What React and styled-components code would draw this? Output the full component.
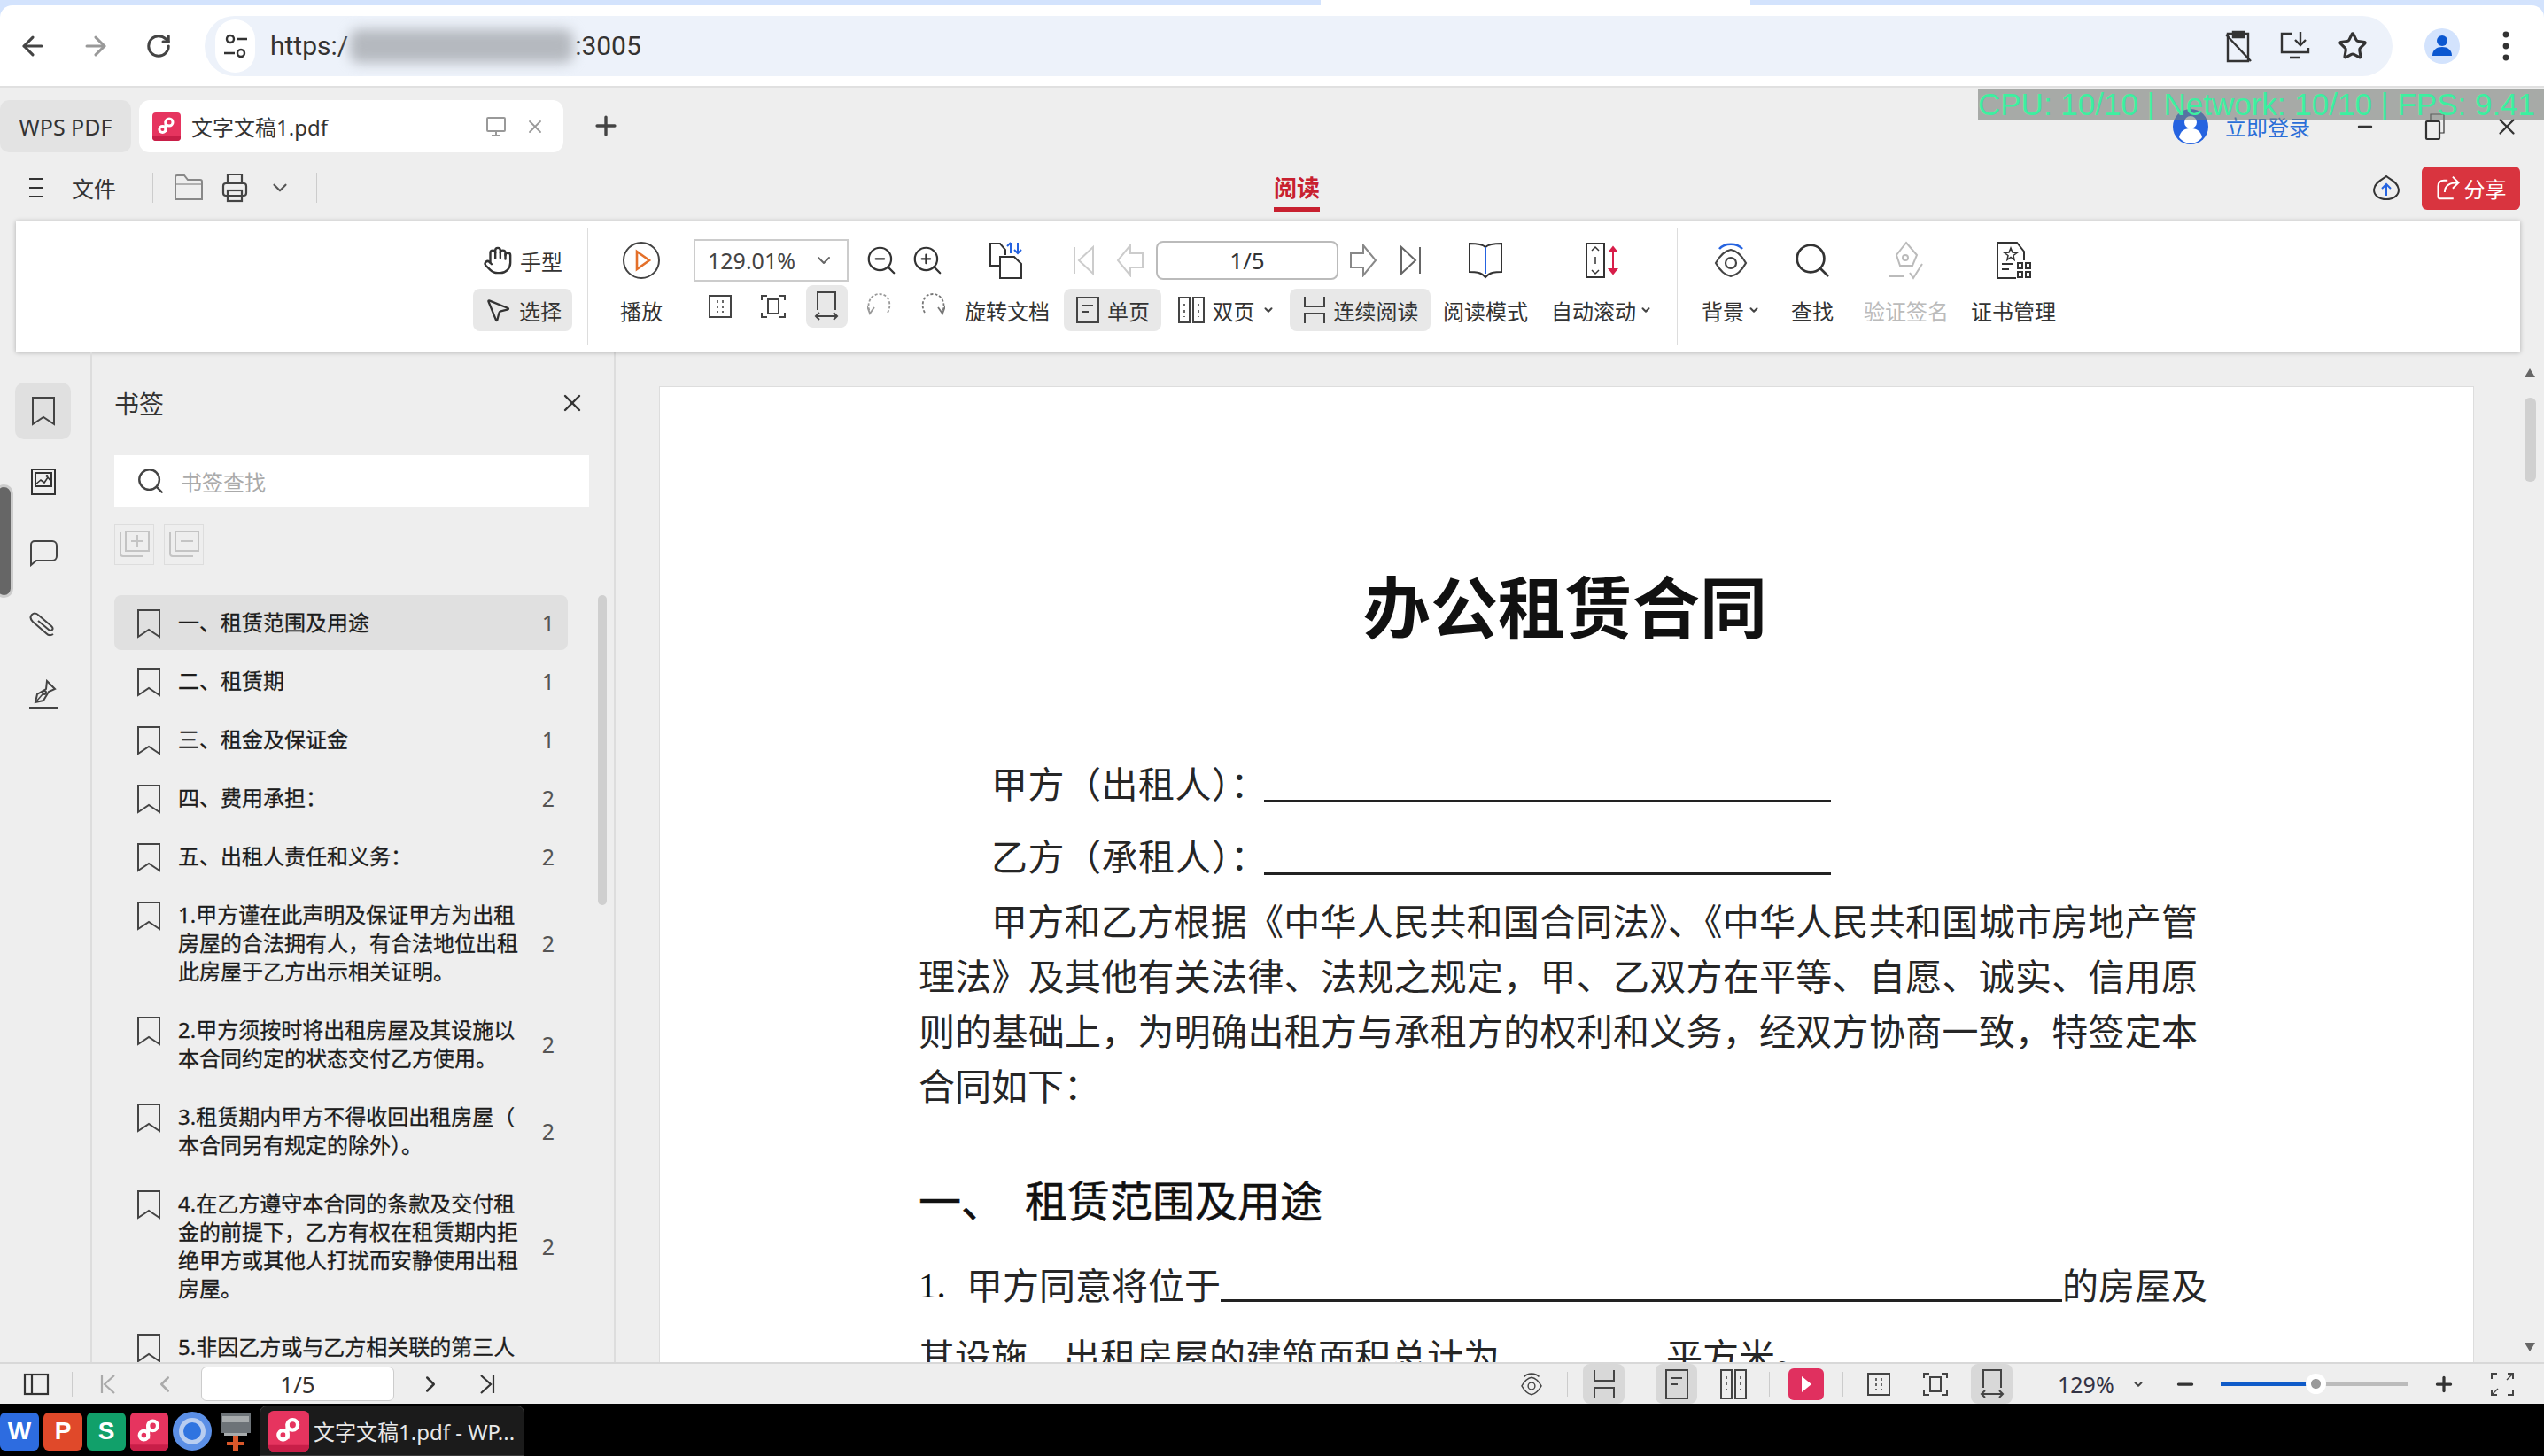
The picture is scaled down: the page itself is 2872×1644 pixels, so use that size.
import React from 'react';
import styled, { createGlobalStyle } from 'styled-components';
import {
  ArrowLeft, ArrowRight, RotateCw, Star, Plus, X, Minus, ChevronDown, ChevronLeft, ChevronRight,
  Hand, MousePointer2, ZoomIn, ZoomOut, Search,
} from 'lucide-react';

const GlobalStyle = createGlobalStyle`
  html, body { margin: 0; padding: 0; background: #eee; }
  body {
    width: 2872px;
    height: 1644px;
    overflow: hidden;
    font-family: "Noto Sans", "Noto Sans CJK SC", sans-serif;
    color: #222;
  }
  * { box-sizing: border-box; }
`;

const Svg = ({ w = 40, h = 40, sw = 2, c = '#333', children }) => (
  <svg width={w} height={h} viewBox={`0 0 ${w} ${h}`} fill="none" stroke={c} strokeWidth={sw}>
    {children}
  </svg>
);

// small drawings, sized in real pixels
const BookmarkIcon = () => (
  <Svg w={28} h={34} c="#444"><path d="M2 2H26V32L14 24L2 32Z" /></Svg>
);
const RailImage = () => (
  <Svg w={30} h={32} c="#333">
    <rect x="2" y="2" width="26" height="28" />
    <rect x="6" y="6" width="18" height="15" />
    <path d="M6 19l6-5 4 3 4-6 4 5" strokeWidth="1.6" />
    <circle cx="19" cy="9.5" r="1.4" fill="#333" stroke="none" />
  </Svg>
);
const RailComment = () => (
  <Svg w={34} h={32} c="#444">
    <path d="M7 3H27a5 5 0 0 1 5 5V20a5 5 0 0 1-5 5H9L3 30V7a4 4 0 0 1 4-4Z" />
  </Svg>
);
const RailClip = () => (
  <Svg w={34} h={32} c="#444">
    <path d="M28 28c-3 2-6 1-8-1L5 14c-3-3-3-6-1-8s5-2 8 1l14 12c2 2 2 3 1 4s-3 1-4 0L11 13" />
  </Svg>
);
const RailPen = () => (
  <Svg w={34} h={34} c="#444">
    <path d="M21 2l9 9-7 3-6 10-9 2 2-9 10-6Z" />
    <circle cx="18" cy="15" r="2" />
    <path d="M9 25l7-8" strokeWidth="1.5" />
    <path d="M1 32H33" />
  </Svg>
);
const ExpandIcon = ({ minus }) => (
  <Svg w={36} h={36} c="#c4c4c4">
    <path d="M2 4V28a3 3 0 0 0 3 3H28" />
    <rect x="8" y="3" width="26" height="22" />
    {minus ? <path d="M14 14H28" /> : <path d="M14 14H28M21 7V21" />}
  </Svg>
);
const PdfLogo = ({ size = 32 }) => (
  <svg width={size} height={size} viewBox="0 0 32 32" style={{ flex: 'none' }}>
    <rect width="32" height="32" rx="4" fill="#e6345f" />
    <path d="M0 27H32V28a4 4 0 0 1-4 4H4a4 4 0 0 1-4-4Z" fill="#c81e48" />
    <g fill="none" stroke="#fff" strokeWidth="3">
      <circle cx="11.5" cy="19" r="3.6" />
      <circle cx="19" cy="11" r="4" />
      <path d="M15 10V22" />
    </g>
  </svg>
);
const TabMonitor = () => (
  <Svg w={26} h={26} c="#999">
    <rect x="3" y="3" width="20" height="15" rx="1" />
    <path d="M8 23H18M13 18V23" />
  </Svg>
);
const UserBlue = () => (
  <svg width="42" height="42" viewBox="0 0 42 42">
    <circle cx="21" cy="21" r="20" fill="#2563e0" />
    <circle cx="21" cy="16" r="7" fill="#fff" />
    <path d="M8 33c2-8 7-10 13-10s11 2 13 10c-3 4-8 7-13 7s-10-3-13-7Z" fill="#fff" />
  </svg>
);
const Restore = () => (
  <Svg w={26} h={34} c="#333" sw={2.2}>
    <rect x="3" y="11" width="15" height="20" rx="1" />
    <path d="M8 11V3H23V24H18" strokeWidth="1.2" />
  </Svg>
);
const Hamburger = () => (
  <Svg w={20} h={26} c="#333" sw={2.2}><path d="M2 3H18M2 13H18M2 23H18" /></Svg>
);
const Folder = () => (
  <Svg w={34} h={34} c="#888">
    <path d="M2 30V5a2 2 0 0 1 2-2H12L16 8H30a2 2 0 0 1 2 2V30Z" />
    <path d="M2 13H32" strokeWidth="1.2" />
  </Svg>
);
const Printer = () => (
  <Svg w={30} h={34} c="#444" sw={2.2}>
    <path d="M7 12V2H23V12" />
    <rect x="2" y="12" width="26" height="14" rx="3" />
    <rect x="7" y="20" width="16" height="12" />
  </Svg>
);
const Cloud = () => (
  <svg width="32" height="28" viewBox="0 0 32 28" fill="none">
    <path d="M16 1c3 3 13 6 14 15 0 7-6 11-14 11S2 23 2 16C3 7 13 4 16 1Z" stroke="#333" strokeWidth="2" />
    <path d="M16 23V10M11 15l5-5 5 5" stroke="#2563e0" strokeWidth="2" />
  </svg>
);
const ShareArrow = () => (
  <Svg w={34} h={36} c="#fff" sw={2.4}>
    <path d="M16 8H11C6 8 3 11 3 16V30a3 3 0 0 0 3 3H24" />
    <path d="M12 24c0-9 7-13 18-13M23 3l8 8-8 8" />
  </Svg>
);
const PlayCircle = () => (
  <svg width="44" height="44" viewBox="0 0 44 44" fill="none">
    <circle cx="22" cy="22" r="20" stroke="#444" strokeWidth="2" />
    <path d="M17 12L31 22L17 32Z" stroke="#e4702a" strokeWidth="2.6" />
  </svg>
);
const FitPage = () => (
  <Svg w={28} h={28} c="#444">
    <rect x="2" y="2" width="24" height="24" />
    <path d="M11 7V21M17 7V21" strokeDasharray="3 3" strokeWidth="1.6" />
  </Svg>
);
const FitFrame = () => (
  <Svg w={30} h={28} c="#444">
    <path d="M2 7V2H8M22 2H28V7M2 21V26H8M22 26H28V21" />
    <rect x="9" y="6" width="12" height="16" />
  </Svg>
);
const FitWidth = () => (
  <Svg w={28} h={36} c="#444">
    <path d="M4 22V2H24V22" />
    <path d="M2 29H26M6 25l-4 4 4 4M22 25l4 4-4 4" />
  </Svg>
);
const RotateRight = ({ c = '#777' }) => (
  <Svg w={28} h={34} c={c} sw={1.8}>
    <path d="M5 24C0 16 3 3 14 3s15 12 11 20" strokeDasharray="3 2" />
    <path d="M20 18l5 7 3-8" />
  </Svg>
);
const Mirrored = styled.span`
  display: flex;
  transform: scaleX(-1);
`;
const RotateDoc = () => (
  <svg width="44" height="44" viewBox="0 0 44 44" fill="none" stroke="#333" strokeWidth="2">
    <path d="M14 28H3V3H14L20 10V16" />
    <path d="M14 18H30L38 26V42H14Z" />
    <path d="M26 2V14M22 6l4-4M34 2V14M30 10l4 4 4-4" stroke="#2563e0" />
  </svg>
);
const NavFirst = () => (
  <Svg w={28} h={36} c="#ccc"><path d="M3 3V33" /><path d="M24 3L8 18L24 33Z" /></Svg>
);
const NavPrev = () => (
  <Svg w={32} h={38} c="#ccc"><path d="M16 2L2 19L16 36V27H30V11H16Z" /></Svg>
);
const NavNext = () => (
  <Svg w={32} h={38} c="#888"><path d="M16 2L30 19L16 36V27H2V11H16Z" /></Svg>
);
const NavLast = () => (
  <Svg w={28} h={36} c="#666"><path d="M25 3V33" /><path d="M4 3L20 18L4 33Z" /></Svg>
);
const SinglePage = ({ h = 32 }) => (
  <Svg w={28} h={h} c="#444">
    <rect x="2" y="2" width="24" height={h - 4} />
    <path d="M8 11H20M8 18H15" />
  </Svg>
);
const DoublePage = ({ h = 32 }) => (
  <Svg w={32} h={h} c="#444">
    <rect x="2" y="2" width="12" height={h - 4} />
    <rect x="18" y="2" width="12" height={h - 4} />
    <path d="M8 9V24M24 9V24" strokeDasharray="3 4" strokeWidth="1.6" />
  </Svg>
);
const Continuous = ({ h = 30 }) => (
  <Svg w={28} h={h} c="#444">
    <path d={`M3 0V${h / 2 - 4}H25V0M3 ${h}V${h / 2 + 4}H25V${h}`} />
  </Svg>
);
const BookIcon = () => (
  <svg width="40" height="42" viewBox="0 0 40 42" fill="none" stroke="#333" strokeWidth="2">
    <path d="M20 6C16 2 8 2 2 2V34C8 34 15 34 20 40C25 34 32 34 38 34V2C32 2 24 2 20 6Z" />
    <path d="M20 6V36" stroke="#2563e0" />
  </svg>
);
const AutoScroll = () => (
  <svg width="38" height="42" viewBox="0 0 38 42" fill="none" stroke="#333" strokeWidth="2">
    <rect x="2" y="2" width="20" height="38" />
    <path d="M8 10l4-4 4 4M12 17V25M8 32l4 4 4-4" strokeWidth="1.5" />
    <path d="M32 8V34" stroke="#d81e4a" />
    <path d="M28 11l4-5 4 5ZM28 31l4 5 4-5Z" stroke="#d81e4a" fill="#d81e4a" />
  </svg>
);
const EyeIcon = ({ w = 40, h = 40, arc = '#2563e0' }) => (
  <svg width={w} height={h} viewBox="0 0 40 40" fill="none" stroke="#444" strokeWidth="2.2">
    <path d="M7 7C13 0 27 0 33 7" stroke={arc} strokeWidth="2.6" />
    <path d="M3 23C8 14 14 9 20 8C26 9 32 14 37 23C32 32 26 37 20 38C14 37 8 32 3 23Z" />
    <circle cx="20" cy="23" r="6" />
  </svg>
);
const SignCheck = () => (
  <svg width="44" height="44" viewBox="0 0 44 44" fill="none" stroke="#bbb" strokeWidth="2">
    <path d="M22 2L34 16L29 28H15L11 16Z" />
    <circle cx="21" cy="19" r="3" />
    <path d="M2 40H20M26 36l4 6 10-16" />
  </svg>
);
const CertIcon = () => (
  <svg width="42" height="44" viewBox="0 0 42 44" fill="none" stroke="#333" strokeWidth="2">
    <path d="M24 42H3V2H25L33 12V22" />
    <path d="M18 8l2 5 5 .5-4 3 1 5-4-3-4 3 1-5-4-3 5-.5Z" strokeWidth="1.5" />
    <path d="M8 26H20M8 32H16" />
    <rect x="26" y="25" width="5" height="6" />
    <rect x="35" y="25" width="5" height="6" />
    <rect x="26" y="35" width="5" height="6" />
    <rect x="35" y="35" width="5" height="6" />
  </svg>
);
const SiteTune = () => (
  <Svg w={28} h={30} c="#333" sw={2.4}>
    <circle cx="8" cy="7" r="4" />
    <path d="M15 7H27M1 23H13" />
    <circle cx="20" cy="23" r="4" />
  </Svg>
);
const ClipOff = () => (
  <Svg w={32} h={38} c="#333" sw={2.4}>
    <path d="M10 5H4V36H27V5H22" />
    <path d="M10 3H22V9H10Z" fill="#333" />
    <path d="M2 6L30 36" />
  </Svg>
);
const InstallIcon = () => (
  <Svg w={36} h={36} c="#333" sw={2.4}>
    <path d="M14 4H3V25H33V20M12 31H24" />
    <path d="M24 2V16M18 11l6 6 6-6" />
  </Svg>
);
const ChromeUser = () => (
  <svg width="40" height="40" viewBox="0 0 40 40">
    <circle cx="20" cy="20" r="20" fill="#d3e3fd" />
    <circle cx="20" cy="14" r="6" fill="#0b57d0" />
    <path d="M9 31c0-7 5-10 11-10s11 3 11 10Z" fill="#0b57d0" />
  </svg>
);
const Dots = () => (
  <svg width="10" height="36" viewBox="0 0 10 36">
    <circle cx="5" cy="5" r="3.4" fill="#333" />
    <circle cx="5" cy="18" r="3.4" fill="#333" />
    <circle cx="5" cy="31" r="3.4" fill="#333" />
  </svg>
);
const PanelToggle = () => (
  <Svg w={30} h={26} c="#333" sw={2.2}>
    <rect x="2" y="2" width="26" height="22" />
    <path d="M10 2V24" />
  </Svg>
);
const SmallFirst = () => (
  <Svg w={20} h={26} c="#aaa" sw={2.2}><path d="M3 3V23M17 3L6 13L17 23" /></Svg>
);
const SmallLast = () => (
  <Svg w={20} h={26} c="#333" sw={2.2}><path d="M17 3V23M3 3L14 13L3 23" /></Svg>
);
const FullScreen = () => (
  <Svg w={30} h={30} c="#444">
    <path d="M3 9V3H9M21 3H27V9M3 21V27H9M21 27H27V21" />
    <path d="M3 27L10 20M27 3L20 10" strokeWidth="1.4" />
  </Svg>
);
const ChromeBall = () => (
  <svg width="44" height="44" viewBox="0 0 44 44">
    <circle cx="22" cy="22" r="22" fill="#5b8fe6" />
    <circle cx="22" cy="22" r="15" fill="#b8cdf0" />
    <circle cx="22" cy="22" r="10" fill="#2f74e0" />
  </svg>
);
const ToolApp = () => (
  <svg width="36" height="44" viewBox="0 0 36 44">
    <rect x="1" y="2" width="34" height="22" fill="#6d7378" />
    <rect x="3" y="5" width="30" height="7" fill="#a7abad" />
    <rect x="5" y="24" width="26" height="3" fill="#a7abad" />
    <path d="M15 27H21V34H28V38H21V44H15V38H8V34H15Z" fill="#d8572a" />
  </svg>
);

const Screen = styled.div`
  width: 2872px;
  height: 1644px;
  display: flex;
  flex-direction: column;
  overflow: hidden;
  position: relative;
`;

/* browser chrome */
const BrowserTop = styled.div`
  background: linear-gradient(90deg, #d3e3fd 1491px, #fff 1491px, #fff 1976px, #d3e3fd 1976px);
  flex: none;
`;
const BrowserBar = styled.div`
  height: 93px;
  margin-top: 6px;
  background: #fff;
  border-bottom: 2px solid #e0e0e0;
  border-radius: 14px 14px 0 0;
  display: flex;
  align-items: center;
  padding-left: 20px;
`;
const NavBtn = styled.span`
  width: 34px;
  height: 34px;
  margin-right: 37px;
  display: flex;
  align-items: center;
  justify-content: center;
  color: ${(p) => p.$c || '#444'};
`;
const Omnibox = styled.div`
  width: 2470px;
  height: 68px;
  margin-left: -2px;
  background: #edf2fa;
  border-radius: 34px;
  display: flex;
  align-items: center;
  padding: 0 28px 0 12px;
  font-family: Roboto, "Noto Sans", sans-serif;
  font-size: 30px;
  color: #333;
`;
const SiteBtn = styled.span`
  width: 45px;
  height: 60px;
  border-radius: 23px;
  background: #fff;
  margin-right: 17px;
  display: flex;
  align-items: center;
  justify-content: center;
`;
const BlurHost = styled.span`
  display: inline-block;
  width: 252px;
  height: 38px;
  margin: 0 2px;
  border-radius: 10px;
  background: #b5b9bf;
  filter: blur(7px);
`;
const OmniActions = styled.div`
  margin-left: auto;
  display: flex;
  align-items: center;
  gap: 30px;
`;
const BrowserRight = styled.div`
  margin-left: 36px;
  display: flex;
  align-items: center;
  gap: 47px;
`;

/* wps header */
const TabRow = styled.div`
  height: 88px;
  padding-top: 14px;
  display: flex;
  align-items: flex-start;
  background: #eee;
  flex: none;
`;
const HomeTab = styled.div`
  width: 148px;
  height: 59px;
  background: #e3e3e3;
  border-radius: 10px;
  display: flex;
  align-items: center;
  justify-content: center;
  font-size: 25px;
  color: #333;
`;
const DocTab = styled.div`
  width: 479px;
  height: 59px;
  margin-left: 9px;
  background: #fff;
  border-radius: 12px;
  display: flex;
  align-items: center;
  padding: 0 20px 0 15px;
  font-size: 24px;
  color: #333;
  span:nth-child(2) { margin-left: 12px; flex: 1; }
`;
const TabClose = styled(X).attrs({ size: 24, strokeWidth: 1.8, color: '#999' })`
  margin-left: 19px;
`;
const NewTab = styled.span`
  margin: 12px 0 0 31px;
  display: flex;
  color: #444;
`;
const WinControls = styled.div`
  margin-left: auto;
  height: 59px;
  display: flex;
  align-items: center;
  padding-right: 22px;
`;
const LoginText = styled.span`
  margin: 0 42px 0 18px;
  font-size: 24px;
  color: #2a6ed8;
`;
const WinBtn = styled.span`
  width: 40px;
  display: flex;
  justify-content: center;
  margin-left: ${(p) => p.$ml || 0}px;
  color: #333;
`;
const PerfBadge = styled.div`
  position: absolute;
  left: 2233px;
  top: 100px;
  width: 639px;
  height: 36px;
  background: rgba(120, 125, 120, 0.6);
  color: #3cf0a0;
  font-family: "Liberation Sans", sans-serif;
  font-size: 35px;
  line-height: 36px;
  white-space: nowrap;
  overflow: hidden;
  z-index: 5;
`;
const MenuRow = styled.div`
  height: 63px;
  display: flex;
  align-items: flex-start;
  flex: none;
  padding-left: 31px;
`;
const MenuLeft = styled.div`
  width: 1407px;
  height: 50px;
  display: flex;
  align-items: center;
  font-size: 25px;
  color: #333;
`;
const MenuLabel = styled.span`
  margin-left: 30px;
`;
const MenuSep = styled.span`
  width: 1px;
  height: 34px;
  background: #ccc;
  margin: 0 ${(p) => p.$mr || 0}px 0 ${(p) => p.$ml || 0}px;
`;
const MenuIcon = styled.span`
  display: flex;
  margin-left: ${(p) => p.$ml}px;
`;
const ActiveMenu = styled.div`
  width: 52px;
  height: 52px;
  border-bottom: 5px solid #c8202f;
  color: #c8202f;
  font-size: 26px;
  font-weight: 700;
  line-height: 50px;
  white-space: nowrap;
`;
const MenuRight = styled.div`
  margin-left: auto;
  height: 50px;
  display: flex;
  align-items: center;
  padding-right: 27px;
  gap: 24px;
`;
const ShareBtn = styled.div`
  width: 111px;
  height: 49px;
  background: #d9343f;
  border-radius: 6px;
  display: flex;
  align-items: center;
  justify-content: center;
  gap: 4px;
  color: #fff;
  font-size: 24px;
  svg { width: 28px; height: 30px; }
`;

/* ribbon */
const Ribbon = styled.div`
  height: 148px;
  margin: 0 27px 0 18px;
  padding-top: 20px;
  background: #fff;
  box-shadow: 0 0 5px rgba(0, 0, 0, 0.28);
  display: flex;
  align-items: flex-start;
  flex: none;
  position: relative;
  font-size: 24px;
  color: #333;
  white-space: nowrap;
`;
const RibbonSep = styled.span`
  width: 1px;
  height: 132px;
  margin: -12px 0 0 ${(p) => p.$ml}px;
  background: #ddd;
  flex: none;
`;
const ToolColumn = styled.div`
  width: ${(p) => p.$w}px;
  margin-left: ${(p) => p.$ml}px;
  display: flex;
  flex-direction: column;
  align-items: center;
  gap: 8px;
  flex: none;
  color: ${(p) => (p.$off ? '#bbb' : '#333')};
`;
const IconSlot = styled.div`
  height: 48px;
  display: flex;
  align-items: center;
  justify-content: center;
`;
const ToolLabel = styled.div`
  height: 48px;
  display: flex;
  align-items: center;
  gap: 4px;
`;
const ModeBtn = styled.div`
  width: ${(p) => p.$w}px;
  height: 48px;
  display: flex;
  align-items: center;
  justify-content: center;
  gap: 8px;
  border-radius: 8px;
  background: ${(p) => (p.$on ? '#e8e8e8' : 'transparent')};
`;
const ZoomGrid = styled.div`
  width: 290px;
  margin-left: 11px;
  flex: none;
`;
const ZoomTop = styled.div`
  display: grid;
  grid-template-columns: 175px 74px 30px;
  height: 48px;
  margin-bottom: 4px;
  align-items: center;
  justify-items: center;
`;
const ZoomSelect = styled.div`
  width: 175px;
  height: 48px;
  border: 2px solid #ccc;
  display: flex;
  align-items: center;
  justify-content: space-between;
  padding: 0 14px;
  font-size: 25px;
  color: #444;
`;
const FitRow = styled.div`
  display: grid;
  grid-template-columns: repeat(5, 60px);
  height: 48px;
  justify-items: center;
  align-items: center;
`;
const FitBtn = styled.div`
  width: 47px;
  height: 48px;
  display: flex;
  align-items: center;
  justify-content: center;
  border-radius: 8px;
  background: ${(p) => (p.$on ? '#e8e8e8' : 'transparent')};
`;
const PageCluster = styled.div`
  width: 414px;
  margin-left: 16px;
  flex: none;
`;
const PageNav = styled.div`
  display: grid;
  grid-template-columns: 46px 58px 206px 56px 50px;
  height: 48px;
  margin-bottom: 8px;
  align-items: center;
  justify-items: center;
`;
const PageInput = styled.div`
  width: 206px;
  height: 44px;
  border: 2px solid #bbb;
  border-radius: 8px;
  display: flex;
  align-items: center;
  justify-content: center;
  font-size: 26px;
  color: #333;
`;
const ModeRow = styled.div`
  display: flex;
  justify-content: space-between;
`;
const Caret = styled(ChevronDown).attrs({ size: 14, strokeWidth: 3.5 })`
  color: #444;
`;

/* main */
const Body = styled.div`
  flex: 1;
  min-height: 0;
  display: flex;
  background: #eee;
`;
const Rail = styled.div`
  width: 104px;
  flex: none;
  border-right: 2px solid #ddd;
  padding-top: 34px;
  display: flex;
  flex-direction: column;
  align-items: center;
  position: relative;
`;
const RailBtn = styled.div`
  width: 63px;
  height: 64px;
  margin-top: ${(p) => p.$mt || 0}px;
  margin-left: -5px;
  border-radius: 10px;
  display: flex;
  align-items: center;
  justify-content: center;
  background: ${(p) => (p.$on ? '#e0e0e0' : 'transparent')};
`;
const Grabber = styled.div`
  position: absolute;
  left: -6px;
  top: 149px;
  width: 21px;
  height: 128px;
  background: #666;
  border: 3px solid #ccc;
  border-radius: 14px;
`;
const Panel = styled.div`
  width: 591px;
  flex: none;
  border-right: 2px solid #ddd;
  padding-left: 25px;
  overflow: hidden;
`;
const PanelHead = styled.div`
  height: 114px;
  margin-bottom: 2px;
  width: 536px;
  padding-right: 3px;
  display: flex;
  align-items: center;
  justify-content: space-between;
  font-size: 28px;
  color: #333;
`;
const SearchBox = styled.div`
  width: 536px;
  height: 58px;
  background: #fff;
  display: flex;
  align-items: center;
  padding-left: 24px;
  gap: 17px;
  font-size: 24px;
  color: #aaa;
  svg { color: #444; }
`;
const PanelTools = styled.div`
  display: flex;
  gap: 11px;
  margin-top: 20px;
`;
const ExpandBtn = styled.div`
  width: 45px;
  height: 46px;
  border: 1px solid #ddd;
  display: flex;
  align-items: center;
  justify-content: center;
`;
const ListArea = styled.div`
  display: flex;
  align-items: flex-start;
  margin-top: 34px;
`;
const BookmarkList = styled.div`
  width: 512px;
  flex: none;
`;
const ListThumb = styled.div`
  width: 10px;
  height: 350px;
  margin-left: 34px;
  border-radius: 5px;
  background: #cfcfcf;
  flex: none;
`;
const Row = styled.div`
  display: flex;
  align-items: flex-start;
  margin-bottom: 4px;
  padding: 15px 15px 15px 25px;
  border-radius: 8px;
  background: ${(p) => (p.$on ? '#e0e0e0' : 'transparent')};
  svg { flex: none; margin-bottom: -2px; }
`;
const RowText = styled.div`
  width: 388px;
  margin-left: 19px;
  font-size: 24px;
  line-height: 32px;
  color: #1c1c1c;
  -webkit-text-stroke: 0.3px #1c1c1c;
  white-space: nowrap;
`;
const RowNum = styled.div`
  margin-left: auto;
  align-self: center;
  font-size: 25px;
  line-height: 32px;
  color: #555;
`;

/* page */
const DocArea = styled.div`
  flex: 1;
  min-width: 0;
  display: flex;
  padding-left: 49px;
`;
const Page = styled.div`
  width: 2049px;
  margin-top: 38px;
  padding: 209px 311px 0 292px;
  background: #fff;
  border: 1px solid #ddd;
  border-bottom: 0;
  overflow: hidden;
  font-size: 41px;
  line-height: 62px;
  color: #262626;
`;
const DocTitle = styled.div`
  font-size: 76px;
  line-height: 80px;
  font-weight: 700;
  color: #111;
  text-align: center;
  padding-left: 16px;
  margin-bottom: 128px;
`;
const PartyLine = styled.div`
  display: flex;
  margin-left: 82px;
  margin-bottom: ${(p) => p.$mb || 0}px;
  white-space: nowrap;
`;
const PartyLabel = styled.span`
  width: 308px;
  letter-spacing: 0.5px;
`;
const Blank = styled.span`
  display: inline-block;
  width: ${(p) => p.$w}px;
  height: ${(p) => p.$h || 52}px;
  border-bottom: 3px solid ${(p) => (p.$clear ? 'transparent' : '#222')};
  flex: none;
`;
const ParaLine = styled.div`
  white-space: nowrap;
  text-align: justify;
  text-align-last: ${(p) => (p.$last ? 'left' : 'justify')};
  padding-left: ${(p) => p.$indent || 0}px;
`;
const SectionHead = styled.div`
  margin: 69px 0 34px;
  font-size: 48px;
  line-height: 60px;
  color: #111;
  -webkit-text-stroke: 0.5px #111;
  display: flex;
  span:first-child { width: 120px; }
`;
const ClauseLine = styled.div`
  display: flex;
  white-space: nowrap;
  height: 62px;
  margin-bottom: ${(p) => p.$mb || 0}px;
  b { font-weight: 400; font-family: "Liberation Serif", serif; width: 54px; flex: none; color: #111; }
`;
const DocScroll = styled.div`
  width: 26px;
  margin-left: 50px;
  display: flex;
  flex-direction: column;
  align-items: center;
  padding: 18px 0 12px;
`;
const Tri = styled.span`
  width: 0;
  height: 0;
  border-left: 6px solid transparent;
  border-right: 6px solid transparent;
  ${(p) => (p.$down ? 'border-top: 10px solid #666;' : 'border-bottom: 10px solid #666;')}
  ${(p) => p.$down && 'margin-top: auto;'}
`;
const DocThumb = styled.div`
  width: 13px;
  height: 95px;
  margin-top: 23px;
  background: #d0d0d0;
  border-radius: 6px;
`;

/* status bar */
const StatusBar = styled.div`
  height: 47px;
  flex: none;
  border-top: 2px solid #d8d8d8;
  background: #eee;
  display: flex;
  align-items: stretch;
  position: relative;
  gap: 17px;
  padding-right: 32px;
`;
const StatusLeft = styled.div`
  display: flex;
  align-items: center;
  margin-right: auto;
`;
const Cell = styled.div`
  width: ${(p) => p.$w}px;
  height: 100%;
  margin-left: ${(p) => p.$ml || 0}px;
  display: flex;
  align-items: center;
  justify-content: center;
  flex: none;
  color: #333;
  background: ${(p) => (p.$on ? '#d8d8d8' : 'transparent')};
  border-radius: ${(p) => (p.$on ? 8 : 0)}px;
`;
const StatusSep = styled.span`
  width: 1px;
  height: 28px;
  align-self: center;
  background: #ccc;
  margin-left: ${(p) => p.$ml || 0}px;
  flex: none;
`;
const StatusPage = styled.div`
  width: 218px;
  height: 39px;
  background: #fff;
  border: 1px solid #ccc;
  border-radius: 6px;
  display: flex;
  align-items: center;
  justify-content: center;
  font-size: 26px;
  color: #333;
`;
const PlayTile = styled.div`
  width: 40px;
  height: 36px;
  align-self: center;
  margin-left: 4px;
  border-radius: 6px;
  background: #e0305f;
  display: flex;
  align-items: center;
  justify-content: center;
  &::before {
    content: '';
    border-left: 11px solid #fff;
    border-top: 9px solid transparent;
    border-bottom: 9px solid transparent;
  }
`;
const ZoomText = styled.div`
  width: 62px;
  margin-left: 16px;
  align-self: center;
  font-size: 25px;
  color: #334;
  white-space: nowrap;
`;
const Slider = styled.div`
  width: 212px;
  height: 5px;
  align-self: center;
  margin-left: 10px;
  background: #bbb;
  position: relative;
  flex: none;
`;
const SliderFill = styled.div`
  height: 5px;
  background: #0f5bc8;
`;
const SliderThumb = styled.div`
  position: absolute;
  top: -9px;
  left: 96px;
  width: 23px;
  height: 23px;
  border-radius: 50%;
  background: radial-gradient(circle, #999 0 5px, #fff 6px);
`;

/* taskbar */
const Taskbar = styled.div`
  height: 59px;
  flex: none;
  background: #000;
  display: flex;
  align-items: center;
`;
const AppTile = styled.div`
  width: 44px;
  height: 43px;
  margin-right: 5px;
  margin-top: 3px;
  border-radius: 6px;
  background: ${(p) => p.$c};
  color: #fff;
  font-family: "Liberation Sans", sans-serif;
  font-weight: 700;
  font-size: 28px;
  display: flex;
  align-items: center;
  justify-content: center;
  overflow: hidden;
`;
const AppIcon = styled.div`
  margin: ${(p) => p.$m};
  display: flex;
`;
const WindowBtn = styled.div`
  width: 299px;
  height: 57px;
  margin-left: 9px;
  margin-top: 2px;
  background: #1b1b1b;
  border: 1px solid #3a3a3a;
  border-radius: 8px 8px 0 0;
  display: flex;
  align-items: center;
  padding-left: 9px;
  gap: 5px;
  color: #e8e8e8;
  font-size: 24px;
  white-space: nowrap;
`;

const bookmarks = [
  { lines: ['一、租赁范围及用途'], page: 1, on: true },
  { lines: ['二、租赁期'], page: 1 },
  { lines: ['三、租金及保证金'], page: 1 },
  { lines: ['四、费用承担：'], page: 2 },
  { lines: ['五、出租人责任和义务：'], page: 2 },
  { lines: ['1.甲方谨在此声明及保证甲方为出租', '房屋的合法拥有人，有合法地位出租', '此房屋于乙方出示相关证明。'], page: 2 },
  { lines: ['2.甲方须按时将出租房屋及其设施以', '本合同约定的状态交付乙方使用。'], page: 2 },
  { lines: ['3.租赁期内甲方不得收回出租房屋（', '本合同另有规定的除外）。'], page: 2 },
  { lines: ['4.在乙方遵守本合同的条款及交付租', '金的前提下，乙方有权在租赁期内拒', '绝甲方或其他人打扰而安静使用出租', '房屋。'], page: 2 },
  { lines: ['5.非因乙方或与乙方相关联的第三人'] },
];

function BrowserChrome() {
  return (
    <BrowserTop>
      <BrowserBar>
        <NavBtn><ArrowLeft size={34} strokeWidth={2.2} /></NavBtn>
        <NavBtn $c="#999"><ArrowRight size={34} strokeWidth={2.2} /></NavBtn>
        <NavBtn><RotateCw size={30} strokeWidth={2.4} /></NavBtn>
        <Omnibox>
          <SiteBtn><SiteTune /></SiteBtn>
          https:/<BlurHost />:3005
          <OmniActions>
            <ClipOff />
            <InstallIcon />
            <Star size={34} strokeWidth={2.2} color="#333" />
          </OmniActions>
        </Omnibox>
        <BrowserRight>
          <ChromeUser />
          <Dots />
        </BrowserRight>
      </BrowserBar>
    </BrowserTop>
  );
}

function WpsHeader() {
  return (
    <>
      <PerfBadge>CPU: 10/10 | Network: 10/10 | FPS: 9.41</PerfBadge>
      <TabRow>
        <HomeTab>WPS PDF</HomeTab>
        <DocTab>
          <PdfLogo />
          <span>文字文稿1.pdf</span>
          <TabMonitor />
          <TabClose />
        </DocTab>
        <NewTab><Plus size={34} strokeWidth={2.4} /></NewTab>
        <WinControls>
          <UserBlue />
          <LoginText>立即登录</LoginText>
          <WinBtn><Minus size={24} strokeWidth={2.4} /></WinBtn>
          <WinBtn $ml={39}><Restore /></WinBtn>
          <WinBtn $ml={41}><X size={30} strokeWidth={1.8} /></WinBtn>
        </WinControls>
      </TabRow>
      <MenuRow>
        <MenuLeft>
          <Hamburger />
          <MenuLabel>文件</MenuLabel>
          <MenuSep $ml={41} $mr={23} />
          <Folder />
          <MenuIcon $ml={20}><Printer /></MenuIcon>
          <MenuIcon $ml={23}><ChevronDown size={26} strokeWidth={2} color="#555" /></MenuIcon>
          <MenuSep $ml={28} />
        </MenuLeft>
        <ActiveMenu>阅读</ActiveMenu>
        <MenuRight>
          <Cloud />
          <ShareBtn><ShareArrow />分享</ShareBtn>
        </MenuRight>
      </MenuRow>
    </>
  );
}

function RibbonBar() {
  return (
    <Ribbon>
      <ToolColumn $w={112} $ml={516}>
        <ModeBtn $w={112}><Hand size={34} strokeWidth={1.7} />手型</ModeBtn>
        <ModeBtn $w={112} $on><MousePointer2 size={32} strokeWidth={1.7} />选择</ModeBtn>
      </ToolColumn>
      <RibbonSep $ml={17} />
      <ToolColumn $w={96} $ml={12}>
        <IconSlot><PlayCircle /></IconSlot>
        <ToolLabel>播放</ToolLabel>
      </ToolColumn>
      <ZoomGrid>
        <ZoomTop>
          <ZoomSelect>129.01%<ChevronDown size={24} strokeWidth={2} color="#666" /></ZoomSelect>
          <ZoomOut size={38} strokeWidth={1.4} />
          <ZoomIn size={38} strokeWidth={1.4} />
        </ZoomTop>
        <FitRow>
          <FitBtn><FitPage /></FitBtn>
          <FitBtn><FitFrame /></FitBtn>
          <FitBtn $on><FitWidth /></FitBtn>
          <FitBtn><Mirrored><RotateRight c="#999" /></Mirrored></FitBtn>
          <FitBtn><RotateRight /></FitBtn>
        </FitRow>
      </ZoomGrid>
      <ToolColumn $w={96} $ml={16}>
        <IconSlot><RotateDoc /></IconSlot>
        <ToolLabel>旋转文档</ToolLabel>
      </ToolColumn>
      <PageCluster>
        <PageNav>
          <NavFirst />
          <NavPrev />
          <PageInput>1/5</PageInput>
          <NavNext />
          <NavLast />
        </PageNav>
        <ModeRow>
          <ModeBtn $w={110} $on><SinglePage />单页</ModeBtn>
          <ModeBtn $w={125}><DoublePage />双页<Caret /></ModeBtn>
          <ModeBtn $w={159} $on><Continuous />连续阅读</ModeBtn>
        </ModeRow>
      </PageCluster>
      <ToolColumn $w={96} $ml={14}>
        <IconSlot><BookIcon /></IconSlot>
        <ToolLabel>阅读模式</ToolLabel>
      </ToolColumn>
      <ToolColumn $w={116} $ml={25}>
        <IconSlot><AutoScroll /></IconSlot>
        <ToolLabel>自动滚动<Caret /></ToolLabel>
      </ToolColumn>
      <RibbonSep $ml={27} />
      <ToolColumn $w={68} $ml={26}>
        <IconSlot><EyeIcon /></IconSlot>
        <ToolLabel>背景<Caret /></ToolLabel>
      </ToolColumn>
      <ToolColumn $w={50} $ml={33}>
        <IconSlot><Search size={46} strokeWidth={1.4} /></IconSlot>
        <ToolLabel>查找</ToolLabel>
      </ToolColumn>
      <ToolColumn $w={96} $ml={33} $off>
        <IconSlot><SignCheck /></IconSlot>
        <ToolLabel>验证签名</ToolLabel>
      </ToolColumn>
      <ToolColumn $w={96} $ml={25}>
        <IconSlot><CertIcon /></IconSlot>
        <ToolLabel>证书管理</ToolLabel>
      </ToolColumn>
    </Ribbon>
  );
}

function Sidebar() {
  return (
    <>
      <Rail>
        <Grabber />
        <RailBtn $on><BookmarkIcon /></RailBtn>
        <RailBtn $mt={16}><RailImage /></RailBtn>
        <RailBtn $mt={16}><RailComment /></RailBtn>
        <RailBtn $mt={16}><RailClip /></RailBtn>
        <RailBtn $mt={16}><RailPen /></RailBtn>
      </Rail>
      <Panel>
        <PanelHead>
          书签
          <X size={32} strokeWidth={1.8} color="#333" />
        </PanelHead>
        <SearchBox>
          <Search size={34} strokeWidth={1.7} />
          书签查找
        </SearchBox>
        <PanelTools>
          <ExpandBtn><ExpandIcon /></ExpandBtn>
          <ExpandBtn><ExpandIcon minus /></ExpandBtn>
        </PanelTools>
        <ListArea>
          <BookmarkList>
            {bookmarks.map((b) => (
              <Row key={b.lines[0]} $on={b.on}>
                <BookmarkIcon />
                <RowText>
                  {b.lines.map((l) => <div key={l}>{l}</div>)}
                </RowText>
                <RowNum>{b.page}</RowNum>
              </Row>
            ))}
          </BookmarkList>
          <ListThumb />
        </ListArea>
      </Panel>
    </>
  );
}

function DocumentPage() {
  return (
    <DocArea>
      <Page>
        <DocTitle>办公租赁合同</DocTitle>
        <PartyLine $mb={20}><PartyLabel>甲方（出租人）：</PartyLabel><Blank $w={640} /></PartyLine>
        <PartyLine $mb={11}><PartyLabel>乙方（承租人）：</PartyLabel><Blank $w={640} /></PartyLine>
        <ParaLine $indent={82}>甲方和乙方根据《中华人民共和国合同法》、《中华人民共和国城市房地产管</ParaLine>
        <ParaLine>理法》及其他有关法律、法规之规定，甲、乙双方在平等、自愿、诚实、信用原</ParaLine>
        <ParaLine>则的基础上，为明确出租方与承租方的权利和义务，经双方协商一致，特签定本</ParaLine>
        <ParaLine $last>合同如下：</ParaLine>
        <SectionHead><span>一、</span><span>租赁范围及用途</span></SectionHead>
        <ClauseLine $mb={18}><b>1.</b>甲方同意将位于<Blank $w={950} $h={50} />的房屋及</ClauseLine>
        <ClauseLine>其设施，出租房屋的建筑面积总计为<Blank $w={188} $h={50} $clear />平方米。</ClauseLine>
      </Page>
      <DocScroll>
        <Tri />
        <DocThumb />
        <Tri $down />
      </DocScroll>
    </DocArea>
  );
}

function BottomBar() {
  return (
    <StatusBar>
      <StatusLeft>
        <Cell $w={81}><PanelToggle /></Cell>
        <StatusSep />
        <Cell $w={80}><SmallFirst /></Cell>
        <Cell $w={48}><ChevronLeft size={30} strokeWidth={2} color="#aaa" /></Cell>
        <Cell $w={218} $ml={17}><StatusPage>1/5</StatusPage></Cell>
        <Cell $w={82}><ChevronRight size={30} strokeWidth={2} /></Cell>
        <Cell $w={46}><SmallLast /></Cell>
      </StatusLeft>
      <Cell $w={46}><EyeIcon w={26} h={28} arc="#444" /></Cell>
      <StatusSep />
      <Cell $w={47} $on><Continuous h={32} /></Cell>
      <StatusSep />
      <Cell $w={47} $on><SinglePage h={36} /></Cell>
      <Cell $w={47}><DoublePage h={36} /></Cell>
      <StatusSep />
      <PlayTile />
      <StatusSep $ml={4} />
      <Cell $w={46}><FitPage /></Cell>
      <Cell $w={47}><FitFrame /></Cell>
      <Cell $w={47} $on><FitWidth /></Cell>
      <StatusSep />
      <ZoomText>129%</ZoomText>
      <Cell $w={24}><Caret /></Cell>
      <Cell $w={26} $ml={11}><Minus size={28} strokeWidth={3} /></Cell>
      <Slider>
        <SliderFill style={{ width: 102 }} />
        <SliderThumb />
      </Slider>
      <Cell $w={26} $ml={10}><Plus size={28} strokeWidth={3} /></Cell>
      <Cell $w={30} $ml={21}><FullScreen /></Cell>
    </StatusBar>
  );
}

function WinTaskbar() {
  return (
    <Taskbar>
      <AppTile $c="#2d6ce0">W</AppTile>
      <AppTile $c="#e0492a">P</AppTile>
      <AppTile $c="#11a06a">S</AppTile>
      <AppIcon $m="3px 5px 0 0"><PdfLogo size={43} /></AppIcon>
      <AppIcon $m="3px 9px 0 0"><ChromeBall /></AppIcon>
      <AppIcon $m="3px 0 0 0"><ToolApp /></AppIcon>
      <WindowBtn>
        <PdfLogo size={46} />
        文字文稿1.pdf - WP...
      </WindowBtn>
    </Taskbar>
  );
}

export default function App() {
  return (
    <Screen>
      <GlobalStyle />
      <BrowserChrome />
      <WpsHeader />
      <RibbonBar />
      <Body>
        <Sidebar />
        <DocumentPage />
      </Body>
      <BottomBar />
      <WinTaskbar />
    </Screen>
  );
}
